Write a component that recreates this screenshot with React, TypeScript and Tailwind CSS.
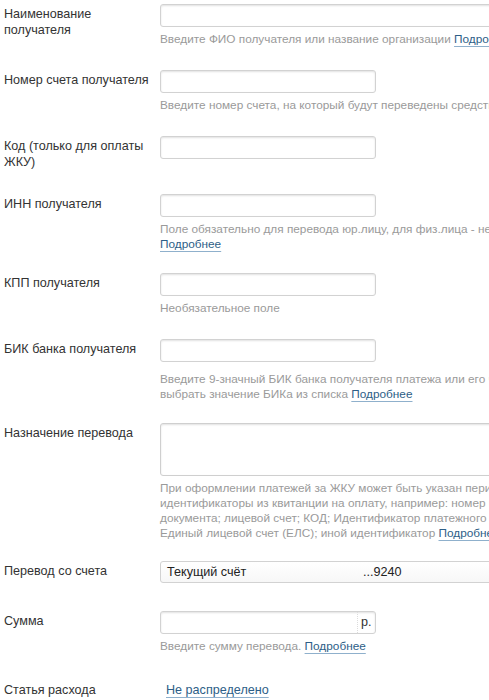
import React from "react";

const font = { fontFamily: '"Liberation Sans", Arial, sans-serif' };

function Link({ children }: { children: React.ReactNode }) {
  return (
    <a className="text-[#2d5e87] underline decoration-[#8fb0cc] underline-offset-[3px] cursor-pointer">
      {children}
    </a>
  );
}

function Input({ wide }: { wide?: boolean }) {
  return (
    <div
      className={`${wide ? "w-[400px]" : "w-[216px]"} h-[23px] rounded-[3px] border border-[#d2d2d2] bg-white shadow-[inset_0_1px_2px_rgba(0,0,0,0.12)]`}
    />
  );
}

function Hint({ children }: { children: React.ReactNode }) {
  return (
    <div className="mt-[5px] text-[11.8px] leading-[15px] text-[#9a9a9a] whitespace-nowrap">
      {children}
    </div>
  );
}

function Row({
  label,
  h,
  children,
}: {
  label: React.ReactNode;
  h: string;
  children: React.ReactNode;
}) {
  return (
    <div className={`flex ${h}`}>
      <div className="w-[160px] shrink-0 pl-[4px] pt-[2px] text-[12.6px] leading-[16px] text-[#333]">
        {label}
      </div>
      <div className="flex flex-col">{children}</div>
    </div>
  );
}

export default function App() {
  return (
    <div className="w-[489px] h-[700px] overflow-hidden bg-white pt-[4px]" style={font}>
      <Row h="h-[66px]" label={<>Наименование<br />получателя</>}>
        <Input wide />
        <Hint>
          Введите ФИО получателя или название организации <Link>Подробнее</Link>
        </Hint>
      </Row>
      <Row h="h-[66px]" label="Номер счета получателя">
        <Input />
        <Hint>Введите номер счета, на который будут переведены средства</Hint>
      </Row>
      <Row h="h-[58px]" label={<>Код (только для оплаты<br />ЖКУ)</>}>
        <Input />
      </Row>
      <Row h="h-[79px]" label="ИНН получателя">
        <Input />
        <Hint>
          Поле обязательно для перевода юр.лицу, для физ.лица - необязательно
          <br />
          <Link>Подробнее</Link>
        </Hint>
      </Row>
      <Row h="h-[66px]" label="КПП получателя">
        <Input />
        <Hint>Необязательное поле</Hint>
      </Row>
      <Row h="h-[84px]" label="БИК банка получателя">
        <Input />
        <div className="mt-[10px] text-[11.8px] leading-[15px] text-[#9a9a9a] whitespace-nowrap">
          Введите 9-значный БИК банка получателя платежа или его часть, чтобы
          <br />
          выбрать значение БИКа из списка <Link>Подробнее</Link>
        </div>
      </Row>
      <Row h="h-[138px]" label="Назначение перевода">
        <div className="w-[400px] h-[53px] rounded-[3px] border border-[#cfcfcf] bg-white shadow-[inset_0_1px_2px_rgba(0,0,0,0.12)]" />
        <Hint>
          При оформлении платежей за ЖКУ может быть указан период оплаты, а также
          <br />
          идентификаторы из квитанции на оплату, например: номер платежного
          <br />
          документа; лицевой счет; КОД; Идентификатор платежного документа (ИПД);
          <br />
          Единый лицевой счет (ЕЛС); иной идентификатор <Link>Подробнее</Link>
        </Hint>
      </Row>
      <Row h="h-[50px]" label="Перевод со счета">
        <div className="w-[400px] h-[22px] rounded-[3px] border border-[#d2d2d2] bg-gradient-to-b from-white to-[#f7f7f7] flex items-center text-[12.6px] text-[#222]">
          <span className="pl-[6px] w-[202px]">Текущий счёт</span>
          <span>...9240</span>
        </div>
      </Row>
      <Row h="h-[69px]" label="Сумма">
        <div className="w-[216px] h-[23px] rounded-[3px] border border-[#d2d2d2] bg-white shadow-[inset_0_1px_2px_rgba(0,0,0,0.12)] flex">
          <div className="flex-1" />
          <div className="w-[18px] border-l border-dotted border-[#dcdcdc] flex items-center pl-[3px] text-[12.6px] text-[#333]">
            р.
          </div>
        </div>
        <Hint>
          Введите сумму перевода. <Link>Подробнее</Link>
        </Hint>
      </Row>
      <div className="flex">
        <div className="w-[166px] shrink-0 pl-[4px] pt-[2px] text-[12.6px] leading-[16px] text-[#333]">
          Статья расхода
        </div>
        <div className="pt-[2px] text-[12.6px] leading-[16px]">
          <Link>Не распределено</Link>
        </div>
      </div>
    </div>
  );
}
